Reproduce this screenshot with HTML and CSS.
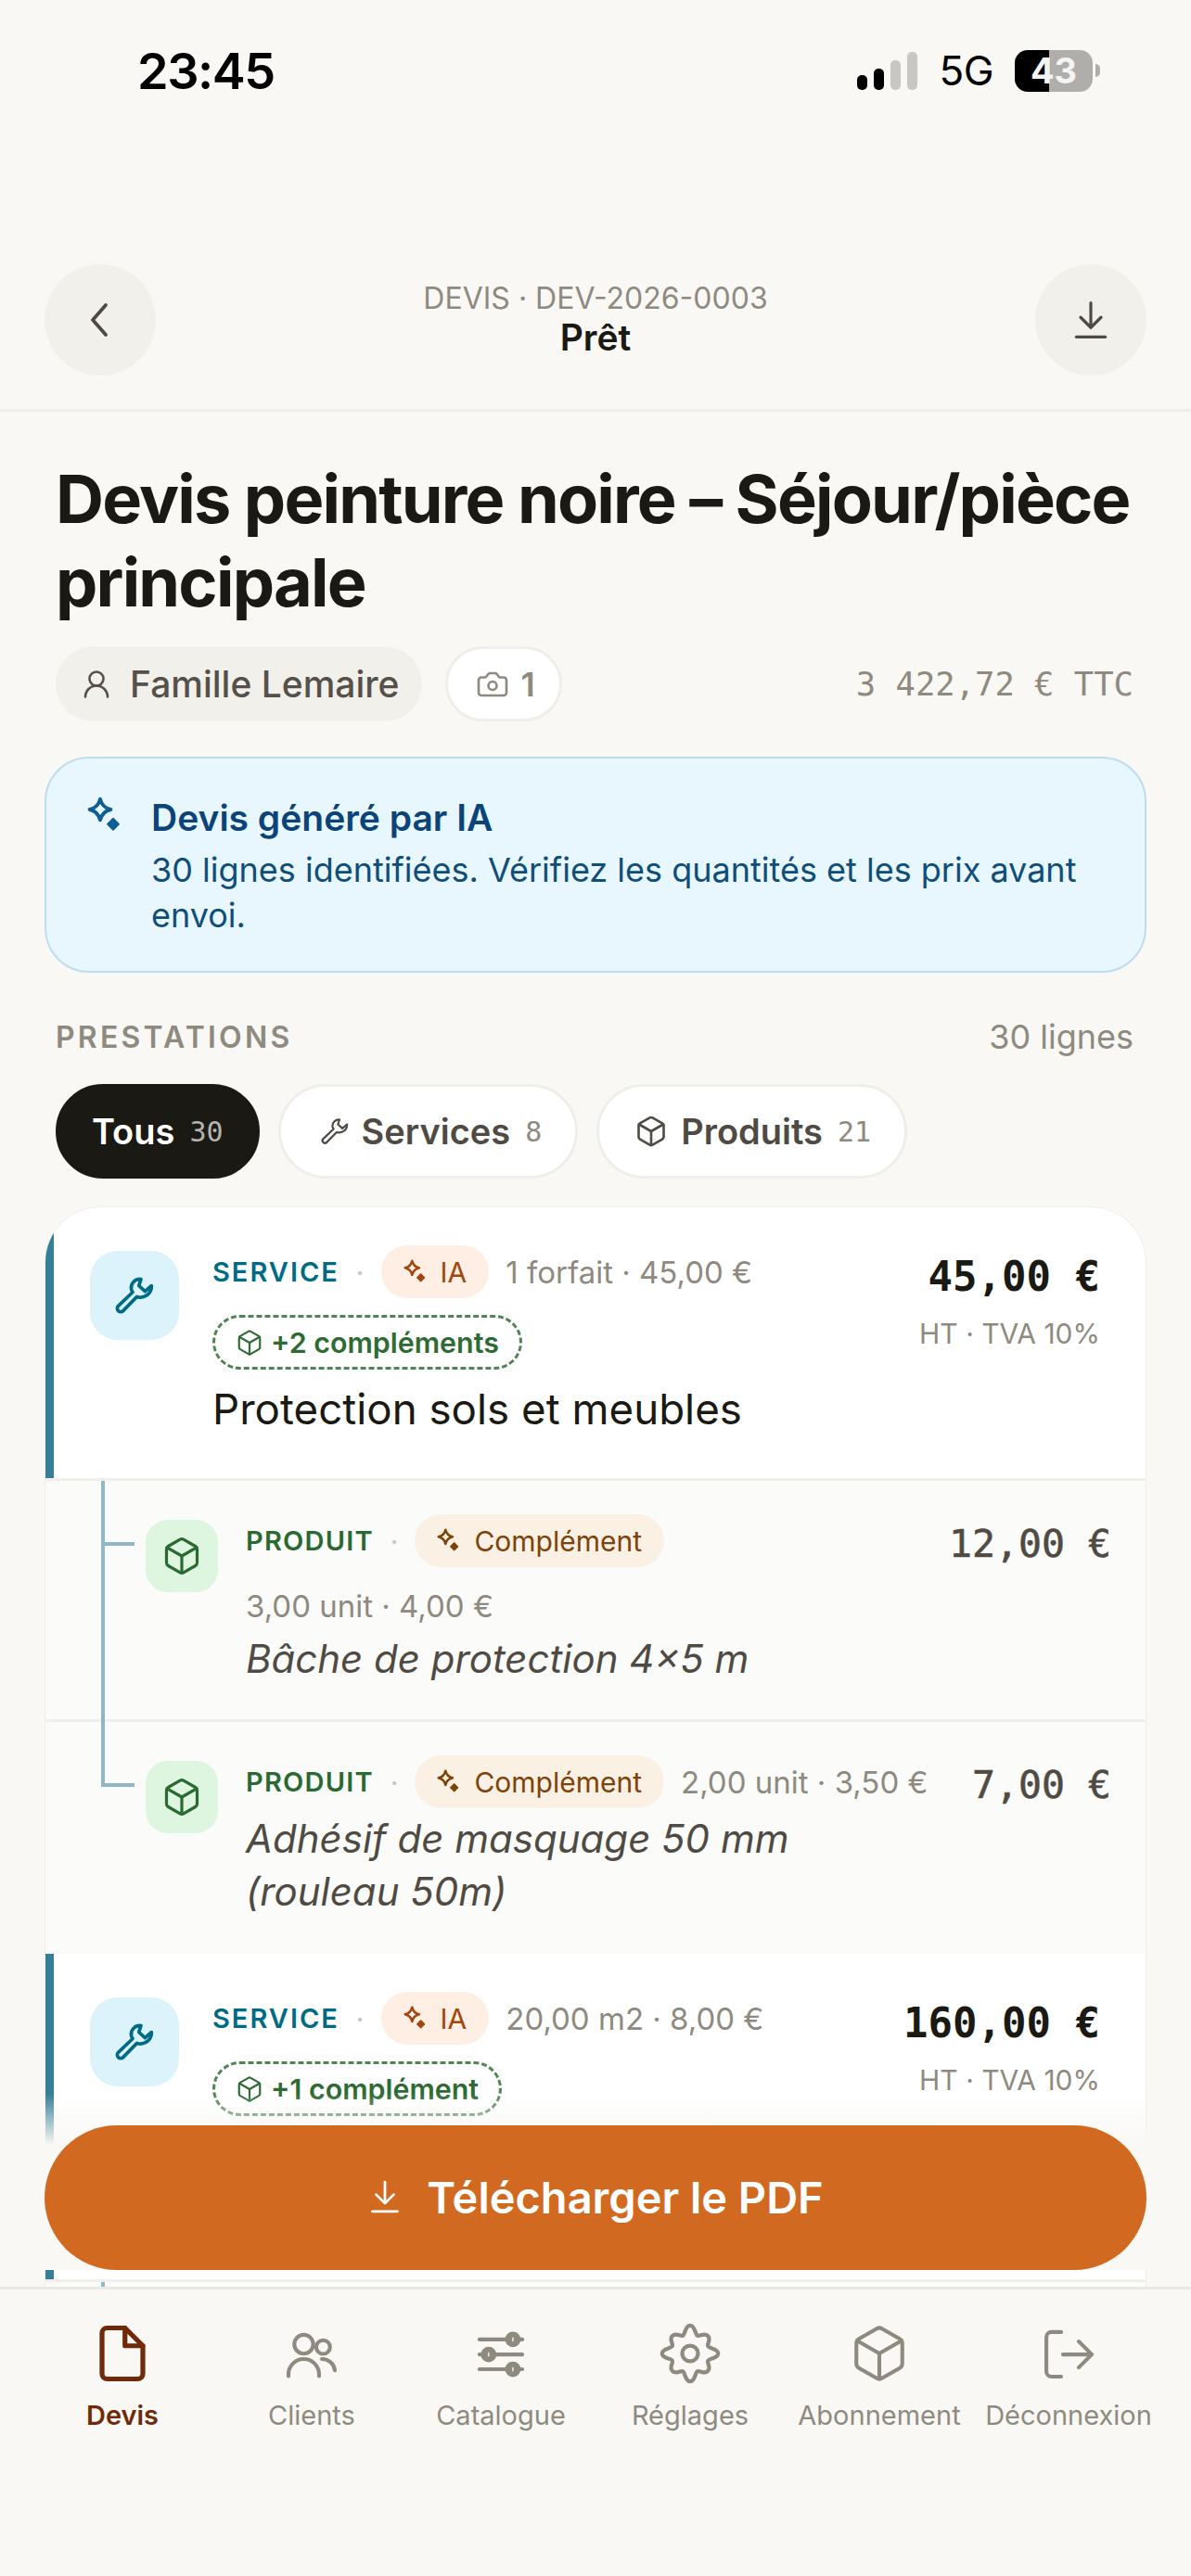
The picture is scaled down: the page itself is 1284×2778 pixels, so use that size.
FILE: index.html
```html
<!DOCTYPE html>
<html lang="fr">
  <head>
    <meta charset="utf-8">
    <title>Devis DEV-2026-0003</title>
    <link rel="stylesheet" href="styles.css">
  </head>
  <body>
    <svg class="sprite" xmlns="http://www.w3.org/2000/svg">
      <symbol id="i-wrench" viewBox="0 0 24 24"><path d="M16 2c-3.500-.3-6.500 2.500-6 6 .1.800.5 1.500.9 2L2 18.500a2.100 2.100 0 0 0 3 3l8.500-8.700c3.800 1.300 9.200-1.300 9-6.800l-4 3.500-3.800-3.500z"/></symbol>
      <symbol id="i-box" viewBox="0 0 24 24"><path d="M21 8a2 2 0 0 0-1-1.730l-7-4a2 2 0 0 0-2 0l-7 4A2 2 0 0 0 3 8v8a2 2 0 0 0 1 1.730l7 4a2 2 0 0 0 2 0l7-4A2 2 0 0 0 21 16Z"/><path d="m3.300 7 8.700 5 8.700-5"/><path d="M12 22V12"/></symbol>
      <symbol id="i-spark" viewBox="0 0 24 24"><path stroke-width="2.200" d="M8 1.500C8.800 5 11 7.200 14.500 8 11 8.800 8.800 11 8 14.500 7.200 11 5 8.800 1.500 8 5 7.200 7.200 5 8 1.500Z"/><path fill="currentColor" stroke-width="1" d="m16 13.500 3.500 3.500-3.500 3.500-3.500-3.500z"/></symbol>
      <symbol id="i-download" viewBox="0 0 24 24"><path d="M12 2v14"/><path d="m6 10.500 6 6 6-6"/><path d="M3.500 22h17"/></symbol>
      <symbol id="i-user" viewBox="0 0 24 24"><circle cx="12" cy="8" r="5"/><path d="M20 21a8 8 0 0 0-16 0"/></symbol>
      <symbol id="i-camera" viewBox="0 0 24 24"><path d="M14.500 4h-5L7 7H4a2 2 0 0 0-2 2v9a2 2 0 0 0 2 2h16a2 2 0 0 0 2-2V9a2 2 0 0 0-2-2h-3z"/><circle cx="12" cy="13" r="3"/></symbol>
      <symbol id="i-file" viewBox="0 0 24 24"><path d="M13 2H6a2 2 0 0 0-2 2v16a2 2 0 0 0 2 2h12a2 2 0 0 0 2-2V9z"/><path d="M13 2v7h7"/></symbol>
      <symbol id="i-users" viewBox="0 0 24 24"><circle cx="8.900" cy="8.400" r="3.700"/><circle cx="16.500" cy="9.500" r="2.700"/><path d="M2.900 20.900v-.7a6 6 0 0 1 12 0v.7"/><path d="M16 14.200a5 5 0 0 1 5.100 4.400"/></symbol>
      <symbol id="i-sliders" viewBox="0 0 24 24"><path d="M3.600 6.500h16.800"/><path d="M3.600 12.400h16.800"/><path d="M3.600 18.200h16.800"/><circle cx="16.700" cy="6.500" r="2.300" fill="currentColor"/><circle cx="7.200" cy="12.400" r="2.300" fill="currentColor"/><circle cx="16.700" cy="18.200" r="2.300" fill="currentColor"/><path class="slider-mark" d="M16.700 5.900v1.200M7.200 11.800V13M16.700 17.600v1.200"/></symbol>
      <symbol id="i-gear" viewBox="0 0 24 24"><path d="M17.910 9.550C18.250 10.380 21.300 10.300 21.300 12 21.300 13.700 18.250 13.620 17.910 14.450 17.570 15.270 19.070 16.670 17.870 17.870 16.670 19.070 15.270 17.570 14.450 17.910 13.620 18.250 13.700 21.300 12 21.300 10.300 21.300 10.380 18.250 9.550 17.910 8.730 17.570 7.330 19.070 6.130 17.870 4.930 16.670 6.430 15.270 6.090 14.450 5.750 13.620 2.700 13.700 2.700 12 2.700 10.300 5.750 10.380 6.090 9.550 6.430 8.730 4.930 7.330 6.130 6.130 7.330 4.930 8.730 6.430 9.550 6.090 10.380 5.750 10.300 2.700 12 2.700 13.700 2.700 13.620 5.750 14.450 6.090 15.270 6.430 16.670 4.930 17.870 6.130 19.070 7.330 17.570 8.730 17.910 9.550Z"/><circle cx="12" cy="12" r="2.600"/></symbol>
      <symbol id="i-logout" viewBox="0 0 24 24"><path d="M9.100 3.600H5.300a2 2 0 0 0-2 2v13.500a2 2 0 0 0 2 2h3.800"/><path d="m16 7.300 5.100 5.100-5.100 5.100"/><path d="M9.800 12.400H21"/></symbol>
    </svg>

    <div class="phone">
      <div class="status-bar">
        <span class="status-time">23:45</span>
        <div class="status-right">
          <div class="signal">
            <span class="bar bar-1"></span>
            <span class="bar bar-2"></span>
            <span class="bar bar-3"></span>
            <span class="bar bar-4"></span>
          </div>
          <span class="network">5G</span>
          <div class="battery"><span class="battery-level">43</span><span class="battery-nib"></span></div>
        </div>
      </div>

      <header class="topbar">
        <button type="button" class="round-btn" aria-label="Retour">
          <svg class="icon icon-back" viewBox="0 0 24 24"><path d="M15 4 8 12l7 8"/></svg>
        </button>
        <div class="topbar-text">
          <div class="topbar-ref">DEVIS · DEV-2026-0003</div>
          <div class="topbar-state">Prêt</div>
        </div>
        <button type="button" class="round-btn" aria-label="Télécharger">
          <svg class="icon icon-dl"><use href="#i-download"/></svg>
        </button>
      </header>

      <main class="content">
        <div class="page-head">
          <h1 class="page-title">Devis peinture noire – Séjour/pièce principale</h1>
          <div class="head-meta">
            <span class="chip chip-client"><svg class="icon"><use href="#i-user"/></svg>Famille Lemaire</span>
            <span class="chip chip-photo"><svg class="icon"><use href="#i-camera"/></svg>1</span>
            <span class="head-total">3 422,72 € TTC</span>
          </div>
        </div>

        <section class="ai-note">
          <svg class="icon"><use href="#i-spark"/></svg>
          <div>
            <div class="ai-title">Devis généré par IA</div>
            <p class="ai-text">30 lignes identifiées. Vérifiez les quantités et les prix avant envoi.</p>
          </div>
        </section>

        <div class="section-head">
          <span class="section-title">PRESTATIONS</span>
          <span class="section-count">30 lignes</span>
        </div>

        <div class="filters">
          <button type="button" class="filter filter-active">Tous <span class="filter-count">30</span></button>
          <button type="button" class="filter"><svg class="icon icon-wrench"><use href="#i-wrench"/></svg>Services <span class="filter-count">8</span></button>
          <button type="button" class="filter"><svg class="icon"><use href="#i-box"/></svg>Produits <span class="filter-count">21</span></button>
        </div>

        <div class="lines">
          <article class="line line-service">
            <div class="line-icon"><svg class="icon"><use href="#i-wrench"/></svg></div>
            <div class="line-body">
              <div class="line-tags">
                <span class="kind kind-service">SERVICE</span>
                <span class="dot">·</span>
                <span class="pill pill-ai"><svg class="icon"><use href="#i-spark"/></svg>IA</span>
                <span class="qty">1 forfait · 45,00 €</span>
                <span class="extras"><svg class="icon"><use href="#i-box"/></svg>+2 compléments</span>
              </div>
              <div class="line-title">Protection sols et meubles</div>
            </div>
            <div class="line-price">
              <div class="price">45,00 €</div>
              <div class="tax">HT · TVA 10%</div>
            </div>
          </article>

          <article class="line line-sub">
            <div class="line-icon"><svg class="icon"><use href="#i-box"/></svg></div>
            <div class="line-body">
              <div class="line-tags">
                <span class="kind kind-product">PRODUIT</span>
                <span class="dot">·</span>
                <span class="pill pill-extra"><svg class="icon"><use href="#i-spark"/></svg>Complément</span>
                <span class="qty">3,00 unit · 4,00 €</span>
              </div>
              <div class="line-title">Bâche de protection 4×5 m</div>
            </div>
            <div class="line-price">
              <div class="price">12,00 €</div>
            </div>
          </article>

          <article class="line line-sub line-last">
            <div class="line-icon"><svg class="icon"><use href="#i-box"/></svg></div>
            <div class="line-body">
              <div class="line-tags">
                <span class="kind kind-product">PRODUIT</span>
                <span class="dot">·</span>
                <span class="pill pill-extra"><svg class="icon"><use href="#i-spark"/></svg>Complément</span>
                <span class="qty">2,00 unit · 3,50 €</span>
              </div>
              <div class="line-title">Adhésif de masquage 50 mm<br>(rouleau 50m)</div>
            </div>
            <div class="line-price">
              <div class="price">7,00 €</div>
            </div>
          </article>

          <article class="line line-service line-tall">
            <div class="line-icon"><svg class="icon"><use href="#i-wrench"/></svg></div>
            <div class="line-body">
              <div class="line-tags">
                <span class="kind kind-service">SERVICE</span>
                <span class="dot">·</span>
                <span class="pill pill-ai"><svg class="icon"><use href="#i-spark"/></svg>IA</span>
                <span class="qty">20,00 m2 · 8,00 €</span>
                <span class="extras"><svg class="icon"><use href="#i-box"/></svg>+1 complément</span>
              </div>
            </div>
            <div class="line-price">
              <div class="price">160,00 €</div>
              <div class="tax">HT · TVA 10%</div>
            </div>
          </article>

          <article class="line line-sub"></article>
        </div>

        <div class="cta-wrap">
          <button type="button" class="cta"><svg class="icon"><use href="#i-download"/></svg>Télécharger le PDF</button>
        </div>
      </main>

      <nav class="tabbar">
        <a class="tab tab-active"><span class="tab-icon"><svg class="icon"><use href="#i-file"/></svg></span>Devis</a>
        <a class="tab"><span class="tab-icon"><svg class="icon"><use href="#i-users"/></svg></span>Clients</a>
        <a class="tab"><span class="tab-icon"><svg class="icon"><use href="#i-sliders"/></svg></span>Catalogue</a>
        <a class="tab"><span class="tab-icon"><svg class="icon icon-gear"><use href="#i-gear"/></svg></span>Réglages</a>
        <a class="tab"><span class="tab-icon"><svg class="icon"><use href="#i-box"/></svg></span>Abonnement</a>
        <a class="tab"><span class="tab-icon"><svg class="icon"><use href="#i-logout"/></svg></span>Déconnexion</a>
      </nav>
    </div>
  </body>
</html>
```

FILE: styles.css
```css
* {
  box-sizing: border-box;
  margin: 0;
  padding: 0;
}

body {
  background: #f9f8f5;
  color: #1a1914;
  font-family: Inter, "Noto Sans", sans-serif;
}

button {
  border: none;
  font-family: inherit;
}

.sprite {
  display: none;
}

.icon {
  display: block;
  flex: none;
  width: 48px;
  height: 48px;
  fill: none;
  stroke: currentColor;
  stroke-width: 1.75;
  stroke-linecap: round;
  stroke-linejoin: round;
}

.phone {
  display: flex;
  flex-direction: column;
  height: 2778px;
  overflow: hidden;
}

/* status bar */
.status-bar {
  display: flex;
  justify-content: space-between;
  align-items: center;
  height: 150px;
  padding: 2px 98px 0 148px;
  color: #000;
}

.status-time {
  font-size: 54px;
  font-weight: 600;
  letter-spacing: -1.500px;
}

.status-right {
  display: flex;
  align-items: center;
}

.signal {
  display: flex;
  align-items: flex-end;
  gap: 7px;
  height: 41px;
  margin-right: 23px;
}

.bar {
  width: 11px;
  border-radius: 5px;
  background: #000;
}

.bar-1 { height: 16px; }
.bar-2 { height: 23px; }
.bar-3 { height: 32px; background: #c8c7c4; }
.bar-4 { height: 41px; background: #c8c7c4; }

.network {
  font-size: 44px;
  font-weight: 400;
  letter-spacing: -0.500px;
  margin-right: 23px;
}

.battery {
  display: flex;
  align-items: center;
}

.battery-level {
  width: 84px;
  height: 45px;
  border-radius: 14px;
  background: linear-gradient(90deg, #000 44%, #afaeab 44%);
  color: #f4f4f2;
  font-size: 38px;
  font-weight: 700;
  line-height: 45px;
  text-align: center;
}

.battery-nib {
  width: 5px;
  height: 14px;
  margin-left: 3px;
  border-radius: 0 5px 5px 0;
  background: #afaeab;
}

/* top bar */
.topbar {
  display: flex;
  justify-content: space-between;
  align-items: center;
  padding: 135px 48px 36px;
  border-bottom: 3px solid #efeee9;
}

.round-btn {
  display: flex;
  justify-content: center;
  align-items: center;
  width: 120px;
  height: 120px;
  border-radius: 50%;
  background: #f2f0ea;
  color: #4f4b44;
}

.icon-back {
  width: 48px;
  height: 48px;
  stroke-width: 1.9;
}

.icon-dl {
  width: 44px;
  height: 44px;
}

.topbar-text {
  margin-top: -3px;
  text-align: center;
}

.topbar-ref {
  color: #8f8a7f;
  font-size: 32px;
  line-height: 40px;
}

.topbar-state {
  font-size: 39px;
  font-weight: 600;
  line-height: 44px;
}

/* scrolling part */
.content {
  position: relative;
  flex: 1;
  min-height: 0;
  overflow: hidden;
}

.page-head {
  padding: 49px 62px 0 60px;
}

.page-title {
  margin-right: -30px;
  font-size: 72px;
  font-weight: 700;
  letter-spacing: -1.800px;
  line-height: 90px;
}

.head-meta {
  display: flex;
  align-items: center;
  gap: 25px;
  margin-top: 24px;
}

.chip {
  display: flex;
  align-items: center;
  height: 81px;
  border-radius: 41px;
}

.chip-client {
  gap: 18px;
  padding: 0 24px 0 26px;
  background: #f2f0ea;
  color: #55514a;
  font-size: 39px;
  font-weight: 500;
}

.chip-client .icon {
  width: 36px;
  height: 36px;
}

.chip-photo {
  gap: 13px;
  padding: 0 26px 0 30px;
  border: 3px solid #efeee9;
  background: #fff;
  color: #8f8a7f;
  font-size: 36px;
  font-weight: 600;
}

.chip-photo .icon {
  width: 36px;
  height: 36px;
}

.head-total {
  margin-left: auto;
  color: #8f8a7f;
  font-family: "DejaVu Sans Mono", monospace;
  font-size: 35.500px;
}

.ai-note {
  display: flex;
  gap: 27px;
  margin: 38px 48px 0;
  padding: 38px 40px 35px 44px;
  border: 2px solid #bcdcef;
  border-radius: 48px;
  background: #e8f6fe;
  color: #0f4e78;
}

.ai-note .icon {
  width: 42px;
  height: 42px;
  margin-top: 3px;
  color: #0f5f92;
}

.ai-title {
  color: #0b4478;
  font-size: 39px;
  font-weight: 600;
  line-height: 52px;
}

.ai-text {
  margin-top: 6px;
  font-size: 36px;
  line-height: 49px;
}

.section-head {
  display: flex;
  justify-content: space-between;
  align-items: center;
  margin-top: 47px;
  padding: 0 62px 0 60px;
  height: 44px;
  color: #8f8a7f;
}

.section-title {
  font-size: 32px;
  font-weight: 600;
  letter-spacing: 3.200px;
}

.section-count {
  font-size: 36px;
}

.filters {
  display: flex;
  gap: 20px;
  margin-top: 29px;
  padding: 0 60px;
}

.filter {
  display: flex;
  align-items: center;
  gap: 14px;
  height: 102px;
  padding: 0 36px;
  border: 3px solid #efeee9;
  border-radius: 51px;
  background: #fff;
  color: #4f4b44;
  font-size: 38px;
  font-weight: 600;
}

.filter .icon {
  width: 36px;
  height: 36px;
  margin-left: 2px;
}

.filter .icon-wrench {
  width: 30px;
  height: 30px;
  margin-left: 7px;
}

.filter-active {
  border-color: #1a1914;
  background: #1a1914;
  color: #fff;
}

.filter-count {
  margin-left: 2px;
  color: #8f8a7f;
  font-family: "DejaVu Sans Mono", monospace;
  font-size: 30px;
  font-weight: 400;
}

.filter-active .filter-count {
  color: #b5b3ac;
}

/* quote lines */
.lines {
  margin: 30px 48px 0;
  border: 1px solid #efeee9;
  border-radius: 60px 60px 0 0;
  background: #fff;
  overflow: hidden;
}

.line {
  position: relative;
  display: flex;
  align-items: flex-start;
  border-bottom: 3px solid #f0efeb;
}

.line-service {
  padding: 41px 49px 46px 48px;
  box-shadow: inset 9px 0 0 #357f99;
}

.line-sub {
  padding: 36px 37px 37px 108px;
  background: #fbfbfa;
}

.line-sub::before {
  content: "";
  position: absolute;
  top: 0;
  bottom: -3px;
  left: 60px;
  width: 4px;
  background: #8fb7c8;
}

.line-sub::after {
  content: "";
  position: absolute;
  top: 66px;
  left: 60px;
  width: 36px;
  height: 4px;
  background: #8fb7c8;
}

.line-last {
  padding-bottom: 39px;
  border-bottom: none;
}

.line-last::before {
  bottom: auto;
  height: 70px;
}

.line-tall {
  min-height: 354px;
}

.line-icon {
  display: flex;
  flex: none;
  justify-content: center;
  align-items: center;
  width: 96px;
  height: 96px;
  margin-top: 6px;
  margin-right: 36px;
  border-radius: 30px;
  background: #dcf3fb;
  color: #006b85;
}

.line-icon .icon {
  width: 42px;
  height: 42px;
  stroke-width: 2.100;
}

.line-sub .line-icon {
  width: 78px;
  height: 78px;
  margin-right: 30px;
  border-radius: 24px;
  background: #def6df;
  color: #2a6a32;
}

.line-sub .line-icon .icon {
  width: 44px;
  height: 44px;
  stroke-width: 1.75;
}

.line-body {
  flex: 1;
  min-width: 0;
}

.line-tags {
  display: flex;
  flex-wrap: wrap;
  align-items: center;
  gap: 18px 18px;
}

.kind {
  font-size: 29px;
  font-weight: 600;
  letter-spacing: 2px;
}

.kind-service {
  color: #006b85;
}

.kind-product {
  color: #2a6a32;
  letter-spacing: 1.200px;
}

.dot {
  color: #c6c4bd;
  font-size: 30px;
}

.pill {
  display: flex;
  align-items: center;
  gap: 12px;
  height: 57px;
  padding: 0 24px;
  border-radius: 29px;
  font-size: 30px;
}

.pill .icon {
  width: 28px;
  height: 28px;
}

.pill-ai {
  background: #ffeee3;
  color: #a0460e;
}

.pill-extra {
  background: #fbf0e4;
  color: #7d4308;
}

.qty {
  color: #8f8a7f;
  font-size: 33px;
  line-height: 48px;
}

.extras {
  display: flex;
  align-items: center;
  gap: 8px;
  height: 59px;
  padding: 0 22px;
  border: 3px dashed #4e8552;
  border-radius: 30px;
  color: #2e6b33;
  font-size: 30.400px;
  font-weight: 600;
}

.extras .icon {
  width: 30px;
  height: 30px;
}

.line-title {
  margin-top: 14px;
  font-size: 45.700px;
  line-height: 57px;
}

.line-sub .line-title {
  margin-top: 4px;
  color: #4f4b44;
  font-size: 42px;
  font-style: italic;
}

.line-price {
  flex: none;
  margin-left: 30px;
  text-align: right;
}

.price {
  font-family: "DejaVu Sans Mono", monospace;
  font-size: 44px;
  font-weight: 700;
  line-height: 68px;
}

.line-sub .price {
  margin-top: -2px;
  color: #4f4b44;
  font-size: 41.500px;
  font-weight: 400;
  -webkit-text-stroke: 0.6px #4f4b44;
}

.tax {
  margin-top: 5px;
  color: #8f8a7f;
  font-size: 30px;
  line-height: 44px;
}

/* floating button over the list */
.cta-wrap {
  position: absolute;
  left: 0;
  right: 0;
  bottom: 18px;
  padding: 34px 48px 0;
  background: linear-gradient(180deg, rgba(249, 248, 245, 0), #f9f8f5 55px);
}

.cta {
  display: flex;
  justify-content: center;
  align-items: center;
  gap: 26px;
  width: 100%;
  height: 156px;
  padding-bottom: 2px;
  border-radius: 78px;
  background: #d26921;
  color: #fff;
  font-size: 47px;
  font-weight: 600;
}

.cta .icon {
  width: 38px;
  height: 44px;
}

/* bottom tabs */
.tabbar {
  display: grid;
  grid-template-columns: repeat(6, 204px);
  height: 312px;
  padding: 36px 30px 0;
  border-top: 3px solid #e9e8e3;
  background: #f9f8f5;
}

.tab {
  display: flex;
  flex-direction: column;
  align-items: center;
  gap: 14px;
  color: #8f8a7f;
  font-size: 29px;
  line-height: 40px;
  white-space: nowrap;
}

.tab-active {
  color: #702a0a;
  font-weight: 600;
}

.tab-icon {
  display: flex;
  justify-content: center;
  align-items: center;
  height: 66px;
}

.tab .icon {
  width: 66px;
  height: 66px;
  stroke-width: 1.500;
}

.tab-active .icon {
  stroke-width: 1.900;
}

.tab .icon-gear {
  width: 78px;
  height: 78px;
  stroke-width: 1.300;
}

.slider-mark {
  stroke: #f9f8f5;
  stroke-width: 0.500;
}
```
